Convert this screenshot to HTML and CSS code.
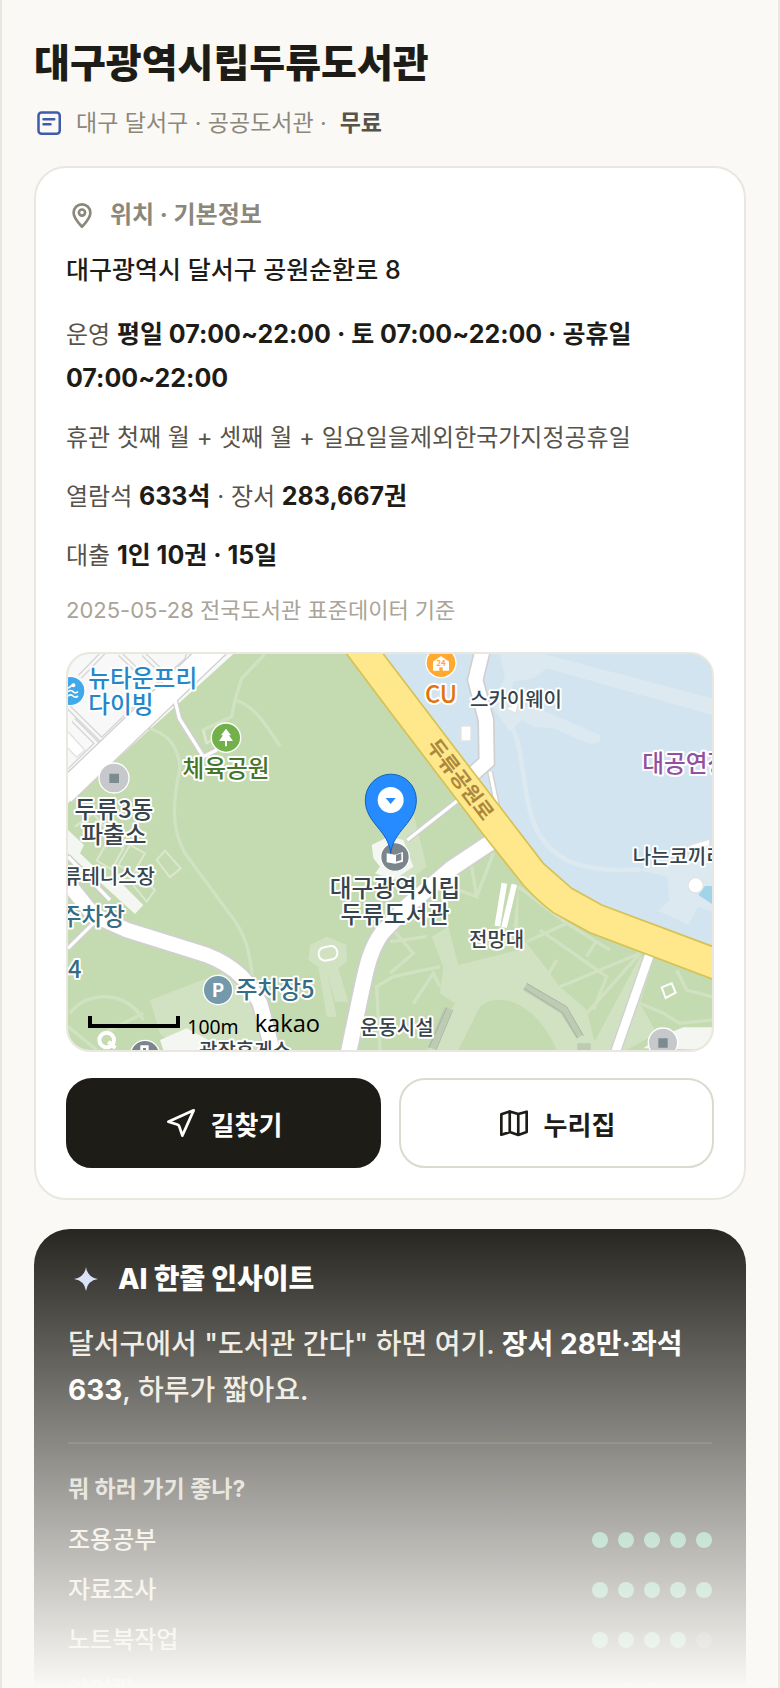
FILE: index.html
```html
<!DOCTYPE html>
<html lang="ko">
<head>
  <meta charset="UTF-8" />
  <meta name="viewport" content="width=device-width, initial-scale=1" />
  <title>대구광역시립두류도서관</title>
  <link rel="stylesheet" href="styles.css">
</head>
<body>

  <main class="page">
    <header class="place">
      <h1>대구광역시립두류도서관</h1>
      <div class="place-sub">
        <svg class="icon-note" viewBox="0 0 24 24" aria-hidden="true">
          <rect x="3.6" y="3.6" width="17" height="17" rx="2.4" />
          <path d="M7.6 9h8.6M7.6 13h5.6" />
        </svg>
        <span>대구 달서구 · 공공도서관 · &nbsp;<strong>무료</strong></span>
      </div>
    </header>

    <section class="card">
      <h2 class="card-title">
        <svg class="icon-pin" viewBox="0 0 24 24" aria-hidden="true">
          <path d="M12 20.8C8.6 17.300 5.700 14 5.700 10.300a6.300 6.300 0 0 1 12.600 0c0 3.700-2.900 7-6.300 10.500z" />
          <circle cx="12" cy="10.200" r="2.300" />
        </svg>
        위치 · 기본정보
      </h2>
      <p class="address">대구광역시 달서구 공원순환로 8</p>
      <div class="facts">
        <p>운영 <b>평일 07:00~22:00 · 토 07:00~22:00 · 공휴일 07:00~22:00</b></p>
        <p>휴관 첫째 월 + 셋째 월 + 일요일을제외한국가지정공휴일</p>
        <p>열람석 <b>633석</b> · 장서 <b>283,667권</b></p>
        <p>대출 <b>1인 10권 · 15일</b></p>
      </div>
      <p class="source">2025-05-28 전국도서관 표준데이터 기준</p>

      <div class="map">
        <svg viewBox="24 42 1932 1188" preserveAspectRatio="xMidYMid slice" role="img" aria-label="도서관 주변 지도">
          <!-- 땅 -->
          <rect x="24" y="42" width="1932" height="1188" fill="#c4dab0" />
          <path d="M930 42H1956V960L1625 850L1460 720L1235 400Z" fill="#d2e4ef" />
          <path d="M24 42H520L24 490Z" fill="#f8f8f8" />

          <!-- 연한 물가 길 -->
          <g fill="#dde9f1">
            <path d="M1320 42H1450L1956 175V225L1460 85L1420 115L1360 125L1350 185L1460 215L1620 285L1620 305L1590 312L1480 265L1420 260L1385 240L1350 275L1290 190L1335 115Z" />
            <path d="M1735 690L1956 625V815L1915 800L1885 855L1795 812L1828 780L1822 710Z" />
          </g>
          <path d="M1345 240C1400 330 1380 460 1430 570C1480 660 1560 700 1740 688" fill="none" stroke="#dde9f1" stroke-width="14" />
          <path d="M1915 765L1935 738H1956V792Z" fill="#a0d4e8" />

          <!-- 공원 안쪽 -->
          <g fill="#d1e2c3">
            <path d="M750 915L800 890L860 915L860 965L835 985L865 1085L825 1085L800 990L830 1130L800 1130L775 980L745 960Z" />
            <path d="M270 1080L520 985L600 1080L640 1230H360L300 1180Z" />
            <path d="M1115 890L1165 860L1195 975L1375 930L1375 740L1360 860L1440 960L1500 1040L1580 1110L1610 1230H1490C1430 1090 1320 1050 1260 1100L1195 1230H1100L1185 1090L1140 1060L1150 980Z" />
            <path d="M1060 520L1100 680L1020 740L960 640Z" />
            <path d="M1740 950L1780 960L1740 1090L1790 1180L1700 1230H1590Z" />
          </g>
          <g fill="none" stroke="#d1e2c3" stroke-width="10">
            <path d="M615 42L545 115L525 180L515 230L430 270L440 310M525 180C590 200 620 260 660 318" />
            <path d="M265 265C330 280 355 330 360 380C340 480 330 560 375 640L500 810C560 880 570 940 578 1020" />
            <path d="M30 1120C80 1050 200 1050 250 1140M24 1160L110 1230M250 1120L130 1180" />
            <path d="M960 1230L950 1040L1000 1010L1140 980M1000 870L1060 940L990 1000M1100 890L990 905M1060 1090L1120 1000L1140 1040" />
            <path d="M1230 650L1250 770L1180 745M1300 640L1250 770M1375 740L1520 850L1400 905M1520 850L1650 930M1440 870L1640 1010L1600 1110M1580 950L1610 900M1500 1040L1740 940L1580 1120M1450 1030L1490 960" />
            <path d="M1850 990L1880 1050L1956 1070M1740 1090L1810 1120L1860 1150L1956 1140" />
          </g>
          <g fill="none" stroke="#dbe8cf" stroke-width="6">
            <path d="M145 600L190 625L155 688L110 662ZM210 615L255 640L220 700L175 675ZM315 632L362 685L330 712L290 660ZM230 700L285 750L260 785L215 730Z" />
            <path d="M45 560L100 520L140 570M430 270L440 310L520 260" />
          </g>
          <g fill="none" stroke="#bccbb1" stroke-width="24">
            <path d="M1395 1040L1510 1110L1560 1190M1165 1105L1115 1225M1552 1222H1592" />
          </g>
          <g fill="none" stroke="#a9b3a6" stroke-width="3">
            <path d="M1400 1030L1520 1100L1570 1187M1392 1045L1508 1118L1553 1194M1178 1110L1128 1230M1160 1103L1106 1225" />
          </g>

          <!-- 건물 -->
          <g fill="#f4f6f1">
            <path d="M24 570L72 615L60 640L160 735L175 720L250 795L225 822L24 640Z" />
            <path d="M935 615L985 590L1030 600L1060 680L1000 720L945 700L960 680L940 655Z" />
            <path d="M300 1200L380 1165L500 1230H310Z" />
            <path d="M1750 1225L1800 1190L1870 1162H1956V1230Z" />
          </g>
          <g fill="#fff" stroke="#e2e2e2" stroke-width="4">
            <path d="M1203 258H1233V303H1203Z" />
            <path d="M1335 205L1375 190L1368 220Z" />
            <path d="M1890 615L1950 597L1948 618L1895 632Z" />
            <path d="M24 275L74 330L50 352L24 325" />
            <circle cx="1907" cy="736" r="23" />
          </g>
          <path d="M1333 730L1312 858M1363 733L1332 862" stroke="#fff" stroke-width="17" />
          <g fill="none" stroke="#fff" stroke-width="6">
            <rect x="776" y="920" width="56" height="40" rx="18" transform="rotate(-12 804 940)" />
            <path d="M1805 1042L1835 1030L1847 1058L1817 1074Z" />
          </g>
          <path d="M140 1178A22 22 0 1 0 140 1222A22 22 0 1 0 140 1178M145 1205L166 1224" fill="none" stroke="#fff" stroke-width="12" />

          <!-- 골목과 길 -->
          <g fill="none" stroke="#d5d5d5" stroke-width="16">
            <path d="M60 110L205 -40M180 42L250 110M250 42L315 105M24 200L125 300L260 170M385 42L380 60L250 175M24 395L110 310L40 240" />
          </g>
          <g fill="none" stroke="#f8f8f8" stroke-width="8">
            <path d="M60 110L205 -40M180 42L250 110M250 42L315 105M24 200L125 300L260 170M385 42L380 60L250 175M24 395L110 310L40 240" />
          </g>
          <g fill="none" stroke="#d0d0d0">
            <path d="M10 460L480 10" stroke-width="76" />
            <path d="M24 730L100 825L200 870L440 945C530 980 570 1030 600 1090L640 1240" stroke-width="54" />
            <path d="M1310 595L1175 685L1040 800L965 880C930 930 920 980 905 1050L865 1240" stroke-width="56" />
            <path d="M1268 30L1246 120L1278 240L1280 365L1230 410" stroke-width="52" />
            <path d="M1195 480L1042 600M1290 395L1312 500M345 180L358 235L430 350L470 330M24 925L130 820M24 650L150 780" stroke-width="18" />
            <path d="M1768 945L1665 1240" stroke-width="34" />
          </g>
          <g fill="none" stroke="#fff">
            <path d="M10 460L480 10" stroke-width="68" />
            <path d="M24 730L100 825L200 870L440 945C530 980 570 1030 600 1090L640 1240" stroke-width="44" />
            <path d="M1310 595L1175 685L1040 800L965 880C930 930 920 980 905 1050L865 1240" stroke-width="46" />
            <path d="M1268 30L1246 120L1278 240L1280 365L1230 410" stroke-width="42" />
            <path d="M1195 480L1042 600M1290 395L1312 500M345 180L358 235L430 350L470 330M24 925L130 820M24 650L150 780" stroke-width="10" />
            <path d="M1768 945L1665 1240" stroke-width="26" />
          </g>
          <path d="M860 42L990 215L1275 590L1390 735Q1430 780 1480 818L1590 878L1970 1022V924L1625 795L1535 745L1450 670L1235 390L970 42L960 30H850Z" fill="#ffe88b" stroke="#d6c154" stroke-width="5" />

          <!-- 장소 표시 -->
          <g stroke="#fff" stroke-width="4">
            <circle cx="31" cy="153" r="44" fill="#3fa9ea" />
            <circle cx="498" cy="293" r="44" fill="#72b04c" />
            <circle cx="162" cy="414" r="45" fill="#c7c8cc" />
            <circle cx="474" cy="1050" r="44" fill="#7399ab" />
            <circle cx="255" cy="1245" r="44" fill="#7b868c" />
            <circle cx="1143" cy="68" r="45" fill="#ffa931" />
            <circle cx="1809" cy="1208" r="44" fill="#c7c8cc" />
            <circle cx="1005" cy="651" r="43" fill="#7b868c" />
          </g>
          <path d="M148 401H177V429H148ZM1795 1195H1823V1223H1795Z" fill="#7b8b90" />
          <path d="M498 266L513 286H507L519 303H501V319H495V303H477L489 286H483Z" fill="#fff" />
          <path d="M24 155q8-7 15 0t15 0M24 168q8-7 15 0t15 0M24 145l14-10" fill="none" stroke="#fff" stroke-width="5" />
          <circle cx="40" cy="136" r="6" fill="#fff" />
          <path d="M1119 65L1143 48L1167 65V92H1148V82H1138V92H1119Z" fill="#fff" />
          <path d="M245 1230V1220H262V1230" fill="none" stroke="#fff" stroke-width="8" />
          <path d="M980 640L1005 644L1029 636V665L1005 671L980 667Z" fill="#fff" />
          <path d="M1008 645L1024 640V660L1008 665Z" fill="#7b868c" />
          <path d="M992 640C986 570 916 550 916 480A76 77 0 0 1 1069 480C1069 550 1000 570 992 640Z" fill="#258bff" stroke="#1161bd" stroke-width="3" />
          <circle cx="992" cy="480" r="39" fill="#fff" />
          <path d="M977 474H1007L992 492Z" fill="#258bff" />

          <!-- 이름 -->
          <g class="label">
            <text x="85" y="141" fill="#2387c9">뉴타운프리</text>
            <text x="85" y="219" fill="#2387c9">다이빙</text>
            <text x="498" y="411" text-anchor="middle" fill="#45762a">체육공원</text>
            <text x="162" y="533" text-anchor="middle">두류3동</text>
            <text x="162" y="610" text-anchor="middle">파출소</text>
            <text x="195" y="855" text-anchor="end" fill="#366c86">주차장</text>
            <text x="24" y="1014" fill="#366c86">4</text>
            <text x="527" y="1074" fill="#366c86">주차장5</text>
            <text x="1005" y="770" text-anchor="middle">대구광역시립</text>
            <text x="1005" y="850" text-anchor="middle">두류도서관</text>
            <text x="1143" y="188" text-anchor="middle" fill="#e2730f">CU</text>
            <text x="1747" y="397" fill="#9251a0">대공연장</text>
          </g>
          <g class="label label-small">
            <text x="285" y="733" text-anchor="end">두류테니스장</text>
            <text x="1230" y="201">스카이웨이</text>
            <text x="1718" y="671">나는코끼리</text>
            <text x="1310" y="921" text-anchor="middle">전망대</text>
            <text x="900" y="1184">운동시설</text>
            <text x="555" y="1255" text-anchor="middle">광장휴게소</text>
          </g>
          <text class="road-name" x="1200" y="440" text-anchor="middle" transform="rotate(53 1200 420)">두류공원로</text>
          <text class="badge-p" x="474" y="1070" text-anchor="middle">P</text>
          <text class="badge-24" x="1143" y="77" text-anchor="middle">24</text>

          <!-- 축척 -->
          <path d="M90 1128V1158H354V1128" fill="none" stroke="#000" stroke-width="12" />
          <text class="scale" x="382" y="1182">100m</text>
          <text class="kakao" x="584" y="1175">kakao</text>
        </svg>
      </div>

      <div class="actions">
        <a class="btn btn-dark" href="#route">
          <svg viewBox="0 0 24 24" aria-hidden="true"><path d="M21.500 2.500L2.500 11L9.200 13.200Q10.400 13.600 10.800 14.800L13 21.500Z" /></svg>
          길찾기
        </a>
        <a class="btn" href="#homepage">
          <svg viewBox="0 0 24 24" aria-hidden="true"><path d="M2.500 5.500L8.800 3.300L15.200 5.300L21.500 3.500V18.800L15.200 21L8.800 18.800L2.500 20.800ZM8.800 3.300V18.800M15.200 5.300V21" /></svg>
          누리집
        </a>
      </div>
    </section>

    <section class="insight">
      <h2 class="insight-title">
        <svg viewBox="0 0 24 24" aria-hidden="true"><path d="M12 4Q13 11 20 12Q13 13 12 20Q11 13 4 12Q11 11 12 4Z" /></svg>
        AI 한줄 인사이트
      </h2>
      <p class="insight-text">달서구에서 "도서관 간다" 하면 여기. <b>장서 28만·좌석 633</b>, 하루가 짧아요.</p>
      <div class="scores">
        <h3>뭐 하러 가기 좋나?</h3>
        <ul>
          <li>조용공부 <span class="dots"><i></i><i></i><i></i><i></i><i></i></span></li>
          <li>자료조사 <span class="dots"><i></i><i></i><i></i><i></i><i></i></span></li>
          <li>노트북작업 <span class="dots"><i></i><i></i><i></i><i></i><i class="off"></i></span></li>
          <li>아이랑 <span class="dots"><i></i><i></i><i></i><i class="off"></i><i class="off"></i></span></li>
        </ul>
      </div>
    </section>
    <div class="fade"></div>
  </main>

</body>
</html>
```
FILE: styles.css
```css
* {
  box-sizing: border-box;
}
body {
  margin: 0;
  background: #faf9f5;
  color: #1e1c17;
  font-family: Inter, "Noto Sans CJK KR", sans-serif;
  font-size: 24px;
}
h1, h2, h3, p, ul {
  margin: 0;
  padding: 0;
}
.page {
  position: relative;
  height: 100vh;
  overflow: hidden;
  padding: 39px 32px 0;
  border: solid #e9e7df;
  border-width: 0 2px;
}

/* 제목 */
h1 {
  font-size: 39px;
  line-height: 48px;
  font-weight: 800;
}
.place-sub {
  display: flex;
  align-items: center;
  gap: 12px;
  margin-top: 21px;
  font-size: 23px;
  line-height: 30px;
  color: #8b877b;
}
.place-sub strong {
  color: #57534a;
}
.place-sub svg {
  width: 30px;
  height: 30px;
}
.icon-note, .icon-pin, .btn svg {
  fill: none;
  stroke: currentColor;
  stroke-width: 2;
  stroke-linecap: round;
  stroke-linejoin: round;
}
.icon-note {
  color: #3f5bab;
}

/* 기본정보 카드 */
.card {
  margin-top: 28px;
  padding: 30px;
  background: #fff;
  border: 2px solid #e9e7df;
  border-radius: 32px;
}
.card-title {
  display: flex;
  align-items: center;
  gap: 12px;
  font-size: 24px;
  line-height: 34px;
  color: #8b877b;
}
.card-title svg {
  width: 32px;
  height: 32px;
}
.address {
  margin-top: 18px;
  font-size: 25px;
  line-height: 40px;
  font-weight: 500;
}
.facts {
  display: flex;
  flex-direction: column;
  gap: 15px;
  margin-top: 23px;
  line-height: 44px;
  color: #57534a;
}
.facts b {
  font-size: 25px;
  line-height: 1;
  color: #1e1c17;
}
.source {
  margin-top: 16px;
  font-size: 22px;
  line-height: 32px;
  color: #a9a497;
}

/* 지도 */
.map {
  height: 400px;
  margin-top: 26px;
  overflow: hidden;
  border: 2px solid #e9e7df;
  border-radius: 24px;
}
.map svg {
  display: block;
  width: 100%;
  height: 100%;
}
.map text {
  font-family: "Noto Sans CJK KR", sans-serif;
}
.label {
  font-size: 71px;
  font-weight: 500;
  fill: #37444c;
  stroke: #fff;
  stroke-width: 12px;
  stroke-linejoin: round;
  paint-order: stroke;
}
.label-small {
  font-size: 60px;
}
.road-name {
  font-size: 62px;
  font-weight: 700;
  fill: #ac883c;
}
.badge-p {
  font-size: 56px;
  font-weight: 700;
  fill: #fff;
}
.badge-24 {
  font-size: 24px;
  font-weight: 700;
  fill: #ffa931;
}
.map .scale {
  font-family: "Noto Sans", sans-serif;
  font-size: 58px;
  font-weight: 400;
}
.map .kakao {
  font-family: "Open Sans", sans-serif;
  font-size: 71px;
  font-weight: 500;
}

/* 버튼 */
.actions {
  display: grid;
  grid-template-columns: 1fr 1fr;
  gap: 18px;
  margin-top: 26px;
}
.btn {
  display: flex;
  align-items: center;
  justify-content: center;
  gap: 14px;
  height: 90px;
  border: 2px solid #dcd9cf;
  border-radius: 26px;
  font-size: 26px;
  font-weight: 700;
  color: #1e1c17;
  text-decoration: none;
}
.btn-dark {
  background: #1e1c17;
  border-color: #1e1c17;
  color: #fff;
}
.btn svg {
  width: 32px;
  height: 32px;
}

/* 인사이트 */
.insight {
  margin-top: 29px;
  padding: 30px 34px;
  background: #1e1c17;
  border-radius: 36px;
  color: #ece8de;
}
.insight-title {
  display: flex;
  align-items: center;
  gap: 14px;
  font-size: 28px;
  line-height: 40px;
  font-weight: 800;
  color: #fff;
}
.insight-title svg {
  width: 36px;
  height: 36px;
  fill: #d5defa;
}
.insight-text {
  margin-top: 22px;
  font-size: 28px;
  line-height: 46px;
  font-weight: 500;
}
.insight-text b {
  color: #fff;
}
.scores {
  margin-top: 29px;
  padding-top: 29px;
  border-top: 2px solid #35332e;
}
.scores h3 {
  font-size: 23px;
  line-height: 32px;
  color: #d0ccc0;
}
.scores ul {
  margin-top: 10px;
  list-style: none;
}
.scores li {
  display: flex;
  align-items: center;
  justify-content: space-between;
  line-height: 50px;
  font-weight: 500;
}
.dots {
  display: flex;
  gap: 10px;
}
.dots i {
  width: 16px;
  height: 16px;
  border-radius: 50%;
  background: #5ab591;
}
.dots .off {
  background: #4a4843;
}
.fade {
  position: absolute;
  right: 0;
  bottom: 0;
  left: 0;
  height: 480px;
  background: linear-gradient(rgba(250, 249, 245, 0), #faf9f5);
}
```
